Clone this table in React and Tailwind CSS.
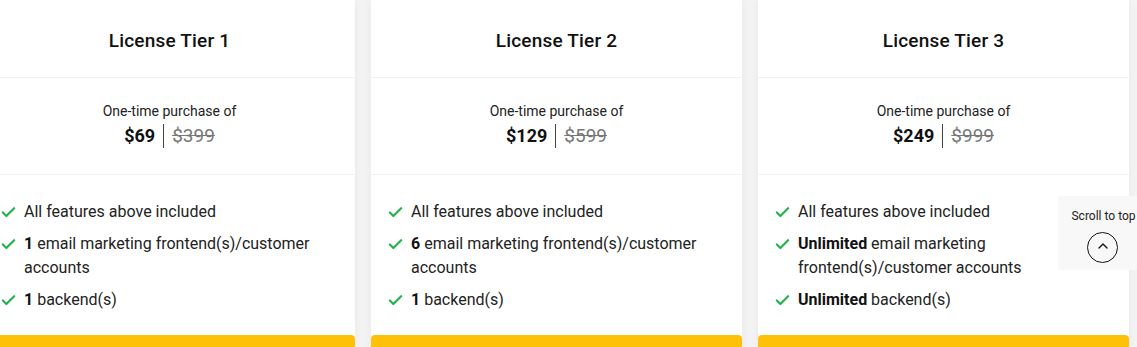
import { Check, ChevronUp } from "lucide-react";

const TIERS = [
  {
    name: "License Tier 1",
    price: "$69",
    was: "$399",
    features: [
      [null, "All features above included"],
      ["1", "email marketing frontend(s)/customer accounts"],
      ["1", "backend(s)"],
    ],
  },
  {
    name: "License Tier 2",
    price: "$129",
    was: "$599",
    features: [
      [null, "All features above included"],
      ["6", "email marketing frontend(s)/customer accounts"],
      ["1", "backend(s)"],
    ],
  },
  {
    name: "License Tier 3",
    price: "$249",
    was: "$999",
    features: [
      [null, "All features above included"],
      ["Unlimited", "email marketing frontend(s)/customer accounts"],
      ["Unlimited", "backend(s)"],
    ],
  },
];

function TierCard({ tier }) {
  return (
    <div className="flex w-[371px] shrink-0 flex-col bg-white shadow-[0_0_10px_rgba(0,0,0,0.06)]">
      <div className="border-b border-[#f1f1f1] pb-[22px] pt-[27px] text-center">
        <h3 className="text-[19px] font-medium leading-[28px] tracking-[0.2px] text-[#111]">
          {tier.name}
        </h3>
      </div>
      <div className="border-b border-[#f1f1f1] pb-[26px] pt-[23px] text-center">
        <p className="text-[14px] leading-[20px] text-[#222]">One-time purchase of</p>
        <div className="mt-[3px] flex items-center justify-center">
          <span className="text-[18px] font-bold leading-[24px] text-[#111]">{tier.price}</span>
          <span className="mx-[8px] h-[24px] w-px bg-[#444]" />
          <span className="text-[19px] leading-[24px] text-[#777] line-through">{tier.was}</span>
        </div>
      </div>
      <ul className="flex flex-col gap-[8px] pb-[23px] pl-[16px] pr-[24px] pt-[25px]">
        {tier.features.map(([bold, text], i) => (
          <li key={i} className="flex items-start gap-[7px] text-[16px] leading-[24px] text-[#222]">
            <Check className="mt-[4px] h-[17px] w-[17px] shrink-0 text-[#22b14c]" strokeWidth={3} />
            <span>
              {bold && <b className="font-bold text-[#111]">{bold}</b>}
              {bold && " "}
              {text}
            </span>
          </li>
        ))}
      </ul>
      <div className="h-[20px] rounded-t-[4px] bg-[#ffc107]" />
    </div>
  );
}

export default function App() {
  return (
    <div className="relative h-[347px] w-[1137px] overflow-hidden bg-[#f4f4f4] font-['Roboto',sans-serif]">
      <div className="-ml-[16px] flex gap-[16px]">
        {TIERS.map((tier) => (
          <TierCard key={tier.name} tier={tier} />
        ))}
      </div>
      <div className="absolute left-[1058px] top-[196px] flex h-[74px] w-[79px] flex-col items-center bg-[#f8f8f8] pt-[12px]">
        <span className="whitespace-nowrap pl-[12px] text-[12px] leading-[16px] text-[#222]">Scroll to top</span>
        <div className="ml-[10px] mt-[8px] flex h-[31px] w-[31px] items-center justify-center rounded-full border-[1.5px] border-[#111]">
          <ChevronUp className="-mt-[3px] h-[16px] w-[16px] text-[#111]" strokeWidth={2} />
        </div>
      </div>
    </div>
  );
}
